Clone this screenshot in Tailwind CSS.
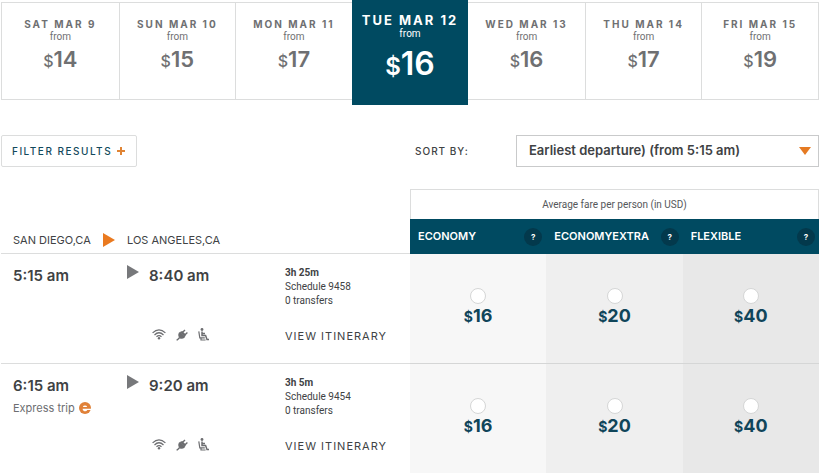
<!DOCTYPE html>
<html lang="en">
<head>
  <meta charset="UTF-8" />
  <meta name="viewport" content="width=device-width,initial-scale=1" />
  <title>San Diego to Los Angeles - Schedules and fares</title>
  <script src="https://cdn.jsdelivr.net/npm/@tailwindcss/browser@4"></script>
</head>
<body class="bg-white font-[Inter,sans-serif] text-[#404244]">
  <!-- Shared icons -->
  <svg class="hidden" aria-hidden="true">
    <symbol id="wifi" viewBox="0 0 14 11">
      <g fill="none" stroke="#6d6e71" stroke-width="1.3">
        <path d="M.6 3.9Q7-2.1 13.4 3.9"/>
        <path d="M2.5 5.9Q7 1.7 11.5 5.9"/>
        <path d="M4.5 7.8Q7 5.5 9.5 7.8"/>
      </g>
      <circle cx="7" cy="9.3" r="1.2" fill="#6d6e71"/>
    </symbol>
    <symbol id="plug" viewBox="0 0 12 12">
      <path d="M3.2 3.6 4.2 2.8 9.2 7.8 8.4 8.8C7 10.1 5 10.2 3.6 9.2 1.9 7.6 1.8 5.3 3.2 3.6Z" fill="#6d6e71"/>
      <path d="M4 3 6.2 2 10 5.8 8.8 8Z" fill="#6d6e71"/>
      <path d="M6.4 3.6 9 1M8.8 6 11.4 3.4M3.6 8.6 2.4 9.8Q1.6 10.2.7 11.4" fill="none" stroke="#6d6e71" stroke-width="1.4"/>
    </symbol>
    <symbol id="seat" viewBox="0 0 11 13">
      <circle cx="4" cy="1.5" r="1.4" fill="#6d6e71"/>
      <path d="M4 3.4V7.6H7.6L9 11.4H11M4.4 5.4H7" fill="none" stroke="#6d6e71" stroke-width="1.5"/>
      <path d="M.8 3.4 1.8 9.8H6.8M3 9.8V12H7.6" fill="none" stroke="#6d6e71" stroke-width="1.2"/>
    </symbol>
  </svg>

  <main class="px-px">
    <!-- Dates -->
    <nav aria-label="Travel dates" class="pt-0.5">
      <ul class="grid grid-cols-7 border border-[#dcdddd] text-center text-[#6f7072]">
        <li><a href="#" class="block h-24 pt-3.5">
          <span class="block text-[10px] leading-3.5 font-bold tracking-[2px]">SAT MAR 9</span>
          <span class="block font-[Roboto,sans-serif] text-[10px] leading-3">from</span>
          <span class="block text-[22px] leading-8 font-semibold"><span class="text-base font-medium">$</span>14</span>
        </a></li>
        <li class="border-l border-[#dcdddd]"><a href="#" class="block h-24 pt-3.5">
          <span class="block text-[10px] leading-3.5 font-bold tracking-[2px]">SUN MAR 10</span>
          <span class="block font-[Roboto,sans-serif] text-[10px] leading-3">from</span>
          <span class="block text-[22px] leading-8 font-semibold"><span class="text-base font-medium">$</span>15</span>
        </a></li>
        <li class="border-l border-[#dcdddd]"><a href="#" class="block h-24 pt-3.5">
          <span class="block text-[10px] leading-3.5 font-bold tracking-[2px]">MON MAR 11</span>
          <span class="block font-[Roboto,sans-serif] text-[10px] leading-3">from</span>
          <span class="block text-[22px] leading-8 font-semibold"><span class="text-base font-medium">$</span>17</span>
        </a></li>
        <li class="-mt-[3px] -mb-1.5 bg-[#004a61] text-white"><a href="#" aria-current="date" class="block pt-3">
          <span class="block text-[13px] leading-4 font-bold tracking-[2px]">TUE MAR 12</span>
          <span class="block font-[Roboto,sans-serif] text-[10px] leading-3">from</span>
          <span class="block text-[32px] leading-12 font-semibold"><span class="text-2xl">$</span>16</span>
        </a></li>
        <li><a href="#" class="block h-24 pt-3.5">
          <span class="block text-[10px] leading-3.5 font-bold tracking-[2px]">WED MAR 13</span>
          <span class="block font-[Roboto,sans-serif] text-[10px] leading-3">from</span>
          <span class="block text-[22px] leading-8 font-semibold"><span class="text-base font-medium">$</span>16</span>
        </a></li>
        <li class="border-l border-[#dcdddd]"><a href="#" class="block h-24 pt-3.5">
          <span class="block text-[10px] leading-3.5 font-bold tracking-[2px]">THU MAR 14</span>
          <span class="block font-[Roboto,sans-serif] text-[10px] leading-3">from</span>
          <span class="block text-[22px] leading-8 font-semibold"><span class="text-base font-medium">$</span>17</span>
        </a></li>
        <li class="border-l border-[#dcdddd]"><a href="#" class="block h-24 pt-3.5">
          <span class="block text-[10px] leading-3.5 font-bold tracking-[2px]">FRI MAR 15</span>
          <span class="block font-[Roboto,sans-serif] text-[10px] leading-3">from</span>
          <span class="block text-[22px] leading-8 font-semibold"><span class="text-base font-medium">$</span>19</span>
        </a></li>
      </ul>
    </nav>

    <!-- Filter and sort -->
    <div class="mt-[35px] flex items-center justify-between">
      <button type="button" class="flex h-8 items-center gap-1 rounded-xs border border-[#dcdddd] px-2.5 text-[10px] font-medium tracking-[1.5px] text-[#12495c]">
        FILTER RESULTS
        <svg class="size-2.5" viewBox="0 0 10 10" aria-hidden="true"><path d="M5 1V9M1 5H9" stroke="#e08434" stroke-width="2"/></svg>
      </button>
      <div class="flex w-1/2 items-center pl-[5px]">
        <label for="sort" class="w-[101px] text-[10px] font-medium tracking-[1px]">SORT BY:</label>
        <div class="relative flex-1">
          <select id="sort" class="h-8 w-full appearance-none border border-[#c9cacb] bg-white pl-3 text-[13px] font-semibold">
            <option>Earliest departure) (from 5:15 am)</option>
          </select>
          <svg class="pointer-events-none absolute top-3 right-2 h-2 w-3" viewBox="0 0 12 8" aria-hidden="true"><path d="M0 0H12L6 8Z" fill="#e57a22"/></svg>
        </div>
      </div>
    </div>

    <!-- Schedules -->
    <table class="mt-[22px] w-full table-fixed border-separate border-spacing-0 text-left">
      <colgroup>
        <col class="w-[126px]" />
        <col class="w-[158px]" />
        <col />
        <col class="w-1/6" />
        <col class="w-1/6" />
        <col class="w-1/6" />
      </colgroup>
      <thead>
        <tr class="h-[30px]">
          <td colspan="3"></td>
          <th colspan="3" class="border border-b-0 border-[#dcdddd] text-center font-[Roboto,sans-serif] text-[10px] font-normal text-[#55575a]">Average fare per person (in USD)</th>
        </tr>
        <tr class="h-[35px]">
          <th colspan="3" class="border-b border-[#dcdddd] pt-2 pl-3 text-[11px] font-normal">
            <div class="flex items-center">
              <span class="w-[90px]">SAN DIEGO,CA</span>
              <svg class="mr-3 h-3.5 w-3" viewBox="0 0 12 14" aria-label="to"><path d="M0 0 12 7 0 14Z" fill="#ea7a1f"/></svg>
              <span>LOS ANGELES,CA</span>
            </div>
          </th>
          <th class="bg-[#004a61] pr-1 pl-2 text-[11px] font-semibold text-white">
            <div class="flex items-center justify-between">ECONOMY
              <button type="button" aria-label="About Economy" class="size-[18px] rounded-full bg-[#03394c] text-[8px] font-bold">?</button>
            </div>
          </th>
          <th class="bg-[#004a61] pr-1 pl-2 text-[11px] font-semibold text-white">
            <div class="flex items-center justify-between">ECONOMYEXTRA
              <button type="button" aria-label="About EconomyExtra" class="size-[18px] rounded-full bg-[#03394c] text-[8px] font-bold">?</button>
            </div>
          </th>
          <th class="bg-[#004a61] pr-1 pl-2 text-[11px] font-semibold text-white">
            <div class="flex items-center justify-between">FLEXIBLE
              <button type="button" aria-label="About Flexible" class="size-[18px] rounded-full bg-[#03394c] text-[8px] font-bold">?</button>
            </div>
          </th>
        </tr>
      </thead>
      <tbody>
        <tr class="h-[110px]">
          <td class="border-b border-[#dcdddd] pt-2.5 pl-3 align-top">
            <div class="text-[15px] leading-6 font-semibold">5:15 am</div>
          </td>
          <td class="border-b border-[#dcdddd] pt-2.5 align-top">
            <div class="flex gap-2.5">
              <svg class="mt-px h-3.5 w-3" viewBox="0 0 12 14" aria-hidden="true"><path d="M0 0 12 7 0 14Z" fill="#77787b"/></svg>
              <span class="text-[15px] leading-6 font-semibold">8:40 am</span>
            </div>
            <div class="mt-10 flex items-center gap-2.5 pl-[25px]">
              <svg class="h-[11px] w-3.5" role="img" aria-label="Wi-Fi"><use href="#wifi"/></svg>
              <svg class="size-3" role="img" aria-label="Power outlets"><use href="#plug"/></svg>
              <svg class="h-[13px] w-[11px]" role="img" aria-label="Extra legroom"><use href="#seat"/></svg>
            </div>
          </td>
          <td class="border-b border-[#dcdddd] pt-3 align-top">
            <div class="font-[Roboto,sans-serif] text-[10px] leading-3.5">
              <div class="font-bold">3h 25m</div>
              <div>Schedule 9458</div>
              <div>0 transfers</div>
            </div>
            <a href="#" class="mt-5 block text-[11px] leading-4 tracking-[1px]">VIEW ITINERARY</a>
          </td>
          <td class="border-b border-[#d5d6d6] bg-[#f7f7f7] pb-1 text-center">
            <label class="inline-flex flex-col items-center text-lg leading-6 font-bold text-[#10455a]">
              <input type="radio" name="fare" class="size-4 appearance-none rounded-full border border-[#d5d6d6] bg-white" />
              <span><span class="text-sm">$</span>16</span>
            </label>
          </td>
          <td class="border-b border-[#d5d6d6] bg-[#efefef] pb-1 text-center">
            <label class="inline-flex flex-col items-center text-lg leading-6 font-bold text-[#10455a]">
              <input type="radio" name="fare" class="size-4 appearance-none rounded-full border border-[#d5d6d6] bg-white" />
              <span><span class="text-sm">$</span>20</span>
            </label>
          </td>
          <td class="border-b border-[#d5d6d6] bg-[#e8e8e8] pb-1 text-center">
            <label class="inline-flex flex-col items-center text-lg leading-6 font-bold text-[#10455a]">
              <input type="radio" name="fare" class="size-4 appearance-none rounded-full border border-[#d5d6d6] bg-white" />
              <span><span class="text-sm">$</span>40</span>
            </label>
          </td>
        </tr>
        <tr class="h-[110px]">
          <td class="pt-2.5 pl-3 align-top">
            <div class="text-[15px] leading-6 font-semibold">6:15 am</div>
            <div class="flex items-center gap-1 text-[11px] leading-5 text-[#6d6e71]">Express trip
              <svg class="size-3" viewBox="0 0 12 12" aria-hidden="true">
                <circle cx="6" cy="6" r="6" fill="#e08138"/>
                <path d="M3.8 5A2.3 2.1 0 0 1 8.2 5ZM3.6 6.7H12V8H8.3A2.5 2.3 0 0 1 3.6 6.7Z" fill="#fff"/>
              </svg>
            </div>
          </td>
          <td class="pt-2.5 align-top">
            <div class="flex gap-2.5">
              <svg class="mt-px h-3.5 w-3" viewBox="0 0 12 14" aria-hidden="true"><path d="M0 0 12 7 0 14Z" fill="#77787b"/></svg>
              <span class="text-[15px] leading-6 font-semibold">9:20 am</span>
            </div>
            <div class="mt-10 flex items-center gap-2.5 pl-[25px]">
              <svg class="h-[11px] w-3.5" role="img" aria-label="Wi-Fi"><use href="#wifi"/></svg>
              <svg class="size-3" role="img" aria-label="Power outlets"><use href="#plug"/></svg>
              <svg class="h-[13px] w-[11px]" role="img" aria-label="Extra legroom"><use href="#seat"/></svg>
            </div>
          </td>
          <td class="pt-3 align-top">
            <div class="font-[Roboto,sans-serif] text-[10px] leading-3.5">
              <div class="font-bold">3h 5m</div>
              <div>Schedule 9454</div>
              <div>0 transfers</div>
            </div>
            <a href="#" class="mt-5 block text-[11px] leading-4 tracking-[1px]">VIEW ITINERARY</a>
          </td>
          <td class="bg-[#f7f7f7] pb-1 text-center">
            <label class="inline-flex flex-col items-center text-lg leading-6 font-bold text-[#10455a]">
              <input type="radio" name="fare" class="size-4 appearance-none rounded-full border border-[#d5d6d6] bg-white" />
              <span><span class="text-sm">$</span>16</span>
            </label>
          </td>
          <td class="bg-[#efefef] pb-1 text-center">
            <label class="inline-flex flex-col items-center text-lg leading-6 font-bold text-[#10455a]">
              <input type="radio" name="fare" class="size-4 appearance-none rounded-full border border-[#d5d6d6] bg-white" />
              <span><span class="text-sm">$</span>20</span>
            </label>
          </td>
          <td class="bg-[#e8e8e8] pb-1 text-center">
            <label class="inline-flex flex-col items-center text-lg leading-6 font-bold text-[#10455a]">
              <input type="radio" name="fare" class="size-4 appearance-none rounded-full border border-[#d5d6d6] bg-white" />
              <span><span class="text-sm">$</span>40</span>
            </label>
          </td>
        </tr>
      </tbody>
    </table>
  </main>
</body>
</html>
